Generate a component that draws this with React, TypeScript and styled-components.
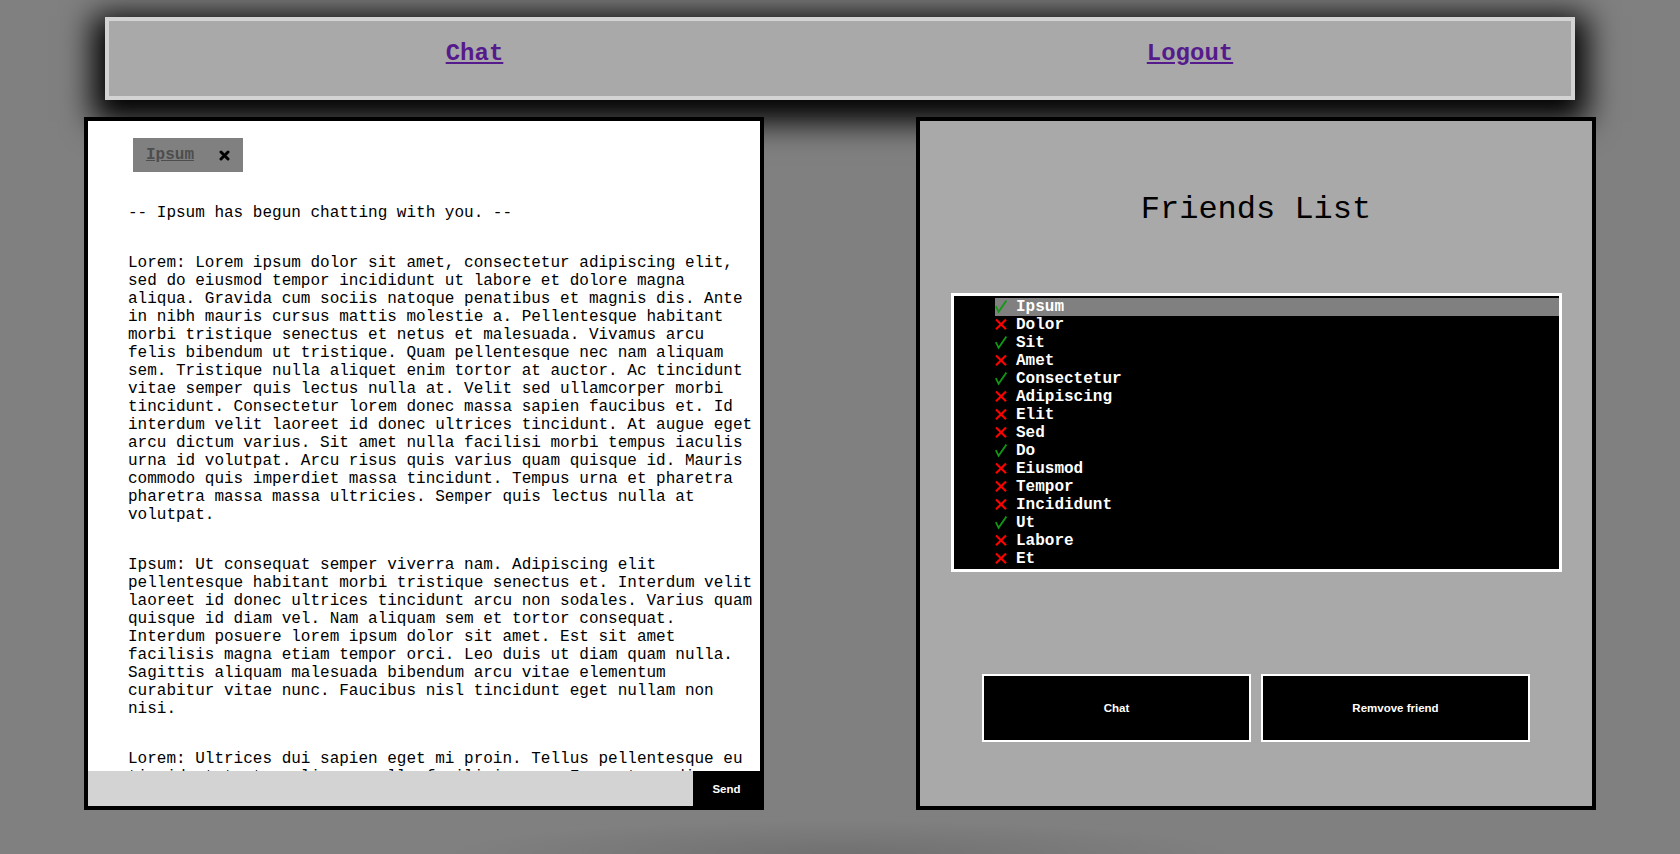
import React from "react";
import styled, { createGlobalStyle } from "styled-components";

const GlobalStyle = createGlobalStyle`
  html, body { margin: 0; padding: 0; }
  body {
    background: #808080;
    font-family: "Liberation Mono", "Courier New", monospace;
    overflow: hidden;
  }
`;

const Page = styled.div`
  min-height: 854px;
  overflow: hidden;
  background: radial-gradient(ellipse 400px 34px at 50% 100%, rgba(0, 0, 0, 0.12), rgba(0, 0, 0, 0)) no-repeat;
  display: flex;
  flex-direction: column;
`;

const Header = styled.nav`
  box-sizing: border-box;
  width: 1470px;
  margin: 17px auto 17px;
  background: #a9a9a9;
  border: 4px solid #d3d3d3;
  box-shadow: 0 10px 30px 12px #000;
  display: grid;
  grid-template-columns: 731px 1fr;
  padding: 19px 0 29px;
`;

const NavItem = styled.div<{ $shift?: number }>`
  text-align: center;
  padding-right: ${(p) => p.$shift ?? 0}px;
`;

const NavLink = styled.a`
  font-family: "Liberation Mono", "Courier New", monospace;
  font-size: 24px;
  font-weight: bold;
  color: #551a8b;
  text-decoration: underline;
  cursor: pointer;
`;

const Main = styled.main`
  display: flex;
  justify-content: space-between;
  padding: 0 84px;
`;

const Panel = styled.section`
  box-sizing: border-box;
  width: 680px;
  height: 693px;
  border: 4px solid #000;
  display: flex;
  flex-direction: column;
`;

const ChatPanel = styled(Panel)`
  background: #fff;
`;

const TabBar = styled.div`
  display: flex;
  padding: 17px 0 0 45px;
  flex-shrink: 0;
`;

const Tab = styled.div`
  display: flex;
  align-items: center;
  height: 34px;
  padding: 0 13px;
  gap: 25px;
  background: #808080;
`;

const TabLink = styled.a`
  font-size: 16px;
  font-weight: bold;
  color: #4d4d4d;
  text-decoration: underline;
  line-height: 18px;
`;

const CloseIcon = styled.svg`
  display: block;
  width: 11px;
  height: 11px;
`;

const Messages = styled.div`
  flex: 1;
  min-height: 0;
  overflow: hidden;
  padding: 32px 2px 0 40px;
`;

const Message = styled.p`
  margin: 0 0 32px;
  font-size: 16px;
  line-height: 18px;
  color: #000;
`;

const InputRow = styled.form`
  display: flex;
  height: 35px;
  flex-shrink: 0;
  margin: 0;
`;

const TextInput = styled.input`
  flex: 1;
  border: none;
  outline: none;
  background: #d3d3d3;
  padding: 0;
  margin: 0;
`;

const SendButton = styled.button`
  width: 67px;
  border: none;
  margin: 0;
  padding: 0;
  background: #000;
  color: #fff;
  font-family: "Liberation Sans", Arial, sans-serif;
  font-weight: bold;
  font-size: 11.5px;
`;

const FriendsPanel = styled(Panel)`
  background: #a9a9a9;
  align-items: center;
`;

const Title = styled.h1`
  margin: 71px 0 0;
  font-family: "Liberation Mono", "Courier New", monospace;
  font-size: 32px;
  font-weight: normal;
  line-height: 36px;
  color: #000;
`;

const ListBox = styled.ul`
  box-sizing: border-box;
  width: 611px;
  height: 279px;
  margin: 65px 0 0;
  padding: 2px 0 0 41px;
  border: 3px solid #fff;
  background: #000;
  list-style: none;
  overflow: hidden;
  flex-shrink: 0;
`;

const FriendRow = styled.li<{ $selected?: boolean }>`
  display: flex;
  align-items: center;
  height: 18px;
  background: ${(p) => (p.$selected ? "#808080" : "transparent")};
  color: #fff;
  font-size: 16px;
  font-weight: bold;
  line-height: 18px;
`;

const StatusIcon = styled.svg`
  display: block;
  width: 12px;
  height: 18px;
  margin-right: 9.5px;
  flex-shrink: 0;
`;

const ButtonRow = styled.div`
  display: flex;
  gap: 10px;
  margin-top: 102px;
`;

const ActionButton = styled.button`
  box-sizing: border-box;
  width: 269px;
  height: 68px;
  border: 2px solid #fff;
  background: #000;
  color: #fff;
  font-family: "Liberation Sans", Arial, sans-serif;
  font-weight: bold;
  font-size: 11.5px;
  padding: 0;
`;

const messages = [
  "-- Ipsum has begun chatting with you. --",
  "Lorem: Lorem ipsum dolor sit amet, consectetur adipiscing elit, sed do eiusmod tempor incididunt ut labore et dolore magna aliqua. Gravida cum sociis natoque penatibus et magnis dis. Ante in nibh mauris cursus mattis molestie a. Pellentesque habitant morbi tristique senectus et netus et malesuada. Vivamus arcu felis bibendum ut tristique. Quam pellentesque nec nam aliquam sem. Tristique nulla aliquet enim tortor at auctor. Ac tincidunt vitae semper quis lectus nulla at. Velit sed ullamcorper morbi tincidunt. Consectetur lorem donec massa sapien faucibus et. Id interdum velit laoreet id donec ultrices tincidunt. At augue eget arcu dictum varius. Sit amet nulla facilisi morbi tempus iaculis urna id volutpat. Arcu risus quis varius quam quisque id. Mauris commodo quis imperdiet massa tincidunt. Tempus urna et pharetra pharetra massa massa ultricies. Semper quis lectus nulla at volutpat.",
  "Ipsum: Ut consequat semper viverra nam. Adipiscing elit pellentesque habitant morbi tristique senectus et. Interdum velit laoreet id donec ultrices tincidunt arcu non sodales. Varius quam quisque id diam vel. Nam aliquam sem et tortor consequat. Interdum posuere lorem ipsum dolor sit amet. Est sit amet facilisis magna etiam tempor orci. Leo duis ut diam quam nulla. Sagittis aliquam malesuada bibendum arcu vitae elementum curabitur vitae nunc. Faucibus nisl tincidunt eget nullam non nisi.",
  "Lorem: Ultrices dui sapien eget mi proin. Tellus pellentesque eu tincidunt tortor aliquam nulla facilisi cras. Fermentum odio eu feugiat pretium nibh ipsum consequat nisl.",
];

const friends: { name: string; online: boolean }[] = [
  { name: "Ipsum", online: true },
  { name: "Dolor", online: false },
  { name: "Sit", online: true },
  { name: "Amet", online: false },
  { name: "Consectetur", online: true },
  { name: "Adipiscing", online: false },
  { name: "Elit", online: false },
  { name: "Sed", online: false },
  { name: "Do", online: true },
  { name: "Eiusmod", online: false },
  { name: "Tempor", online: false },
  { name: "Incididunt", online: false },
  { name: "Ut", online: true },
  { name: "Labore", online: false },
  { name: "Et", online: false },
  { name: "Dolore", online: false },
  { name: "Magna", online: true },
];

const Check = () => (
  <StatusIcon viewBox="0 0 12 18">
    <path d="M0.8 8.2 L3.6 13.8 L11.4 2.6" fill="none" stroke="#119911" strokeWidth="1.8" strokeLinejoin="miter" />
  </StatusIcon>
);

const Cross = () => (
  <StatusIcon viewBox="0 0 12 18">
    <path d="M1 3.5 L11 13.3 M11 3.5 L1 13.3" fill="none" stroke="#ff0000" strokeWidth="2.1" />
  </StatusIcon>
);

export default function App() {
  return (
    <>
      <GlobalStyle />
      <Page>
        <Header>
          <NavItem>
            <NavLink>Chat</NavLink>
          </NavItem>
          <NavItem $shift={31}>
            <NavLink>Logout</NavLink>
          </NavItem>
        </Header>
        <Main>
          <ChatPanel>
            <TabBar>
              <Tab>
                <TabLink>Ipsum</TabLink>
                <CloseIcon viewBox="0 0 11 11">
                  <path d="M2 2 L9 9 M9 2 L2 9" stroke="#000" strokeWidth="3" strokeLinecap="round" />
                </CloseIcon>
              </Tab>
            </TabBar>
            <Messages>
              {messages.map((m, i) => (
                <Message key={i}>{m}</Message>
              ))}
            </Messages>
            <InputRow onSubmit={(e) => e.preventDefault()}>
              <TextInput type="text" />
              <SendButton type="submit">Send</SendButton>
            </InputRow>
          </ChatPanel>
          <FriendsPanel>
            <Title>Friends List</Title>
            <ListBox>
              {friends.map((f, i) => (
                <FriendRow key={f.name} $selected={i === 0}>
                  {f.online ? <Check /> : <Cross />}
                  {f.name}
                </FriendRow>
              ))}
            </ListBox>
            <ButtonRow>
              <ActionButton>Chat</ActionButton>
              <ActionButton>Remvove friend</ActionButton>
            </ButtonRow>
          </FriendsPanel>
        </Main>
      </Page>
    </>
  );
}
